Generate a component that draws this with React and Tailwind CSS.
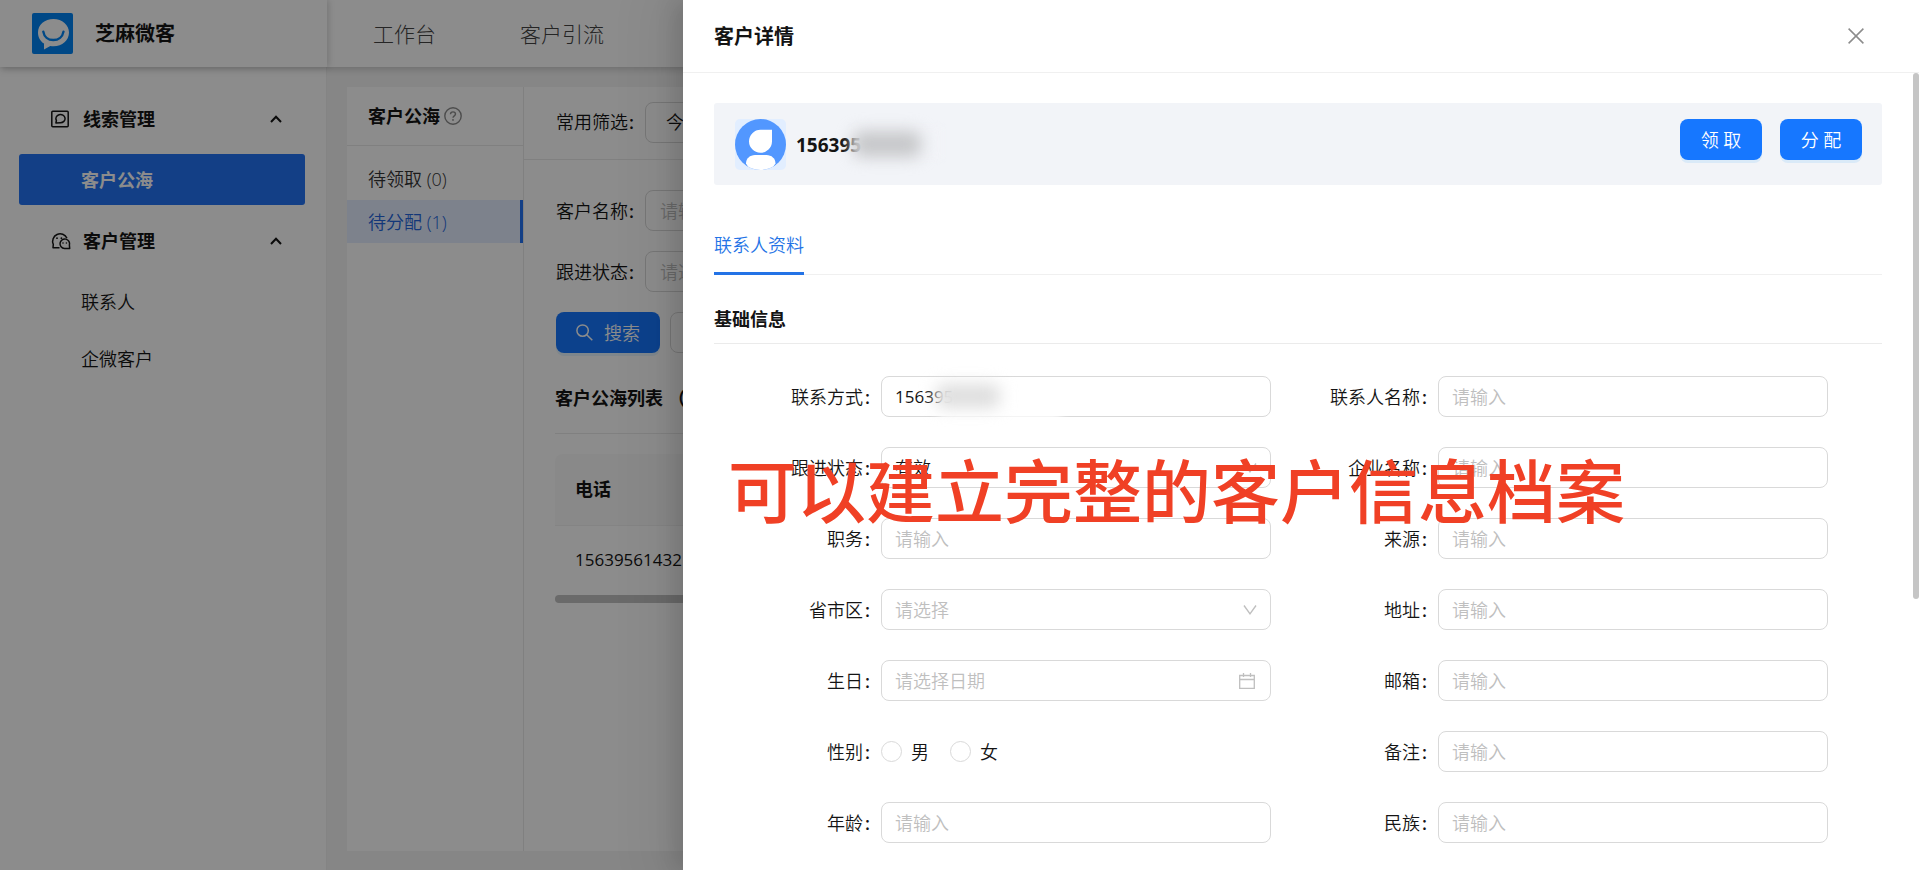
import { useState } from "react";

const TOP_NAV = ["工作台", "客户引流"];

const POOLS = [
  { name: "待领取", count: 0 },
  { name: "待分配", count: 1 },
];

const FIELDS = [
  { id: "phone", label: "联系方式", type: "phone" },
  { id: "name", label: "联系人名称", type: "text" },
  { id: "status", label: "跟进状态", type: "select", value: "有效" },
  { id: "company", label: "企业名称", type: "text" },
  { id: "job", label: "职务", type: "text" },
  { id: "source", label: "来源", type: "text" },
  { id: "region", label: "省市区", type: "select" },
  { id: "address", label: "地址", type: "text" },
  { id: "birthday", label: "生日", type: "date" },
  { id: "email", label: "邮箱", type: "text" },
  { id: "gender", label: "性别", type: "gender" },
  { id: "remark", label: "备注", type: "text" },
  { id: "age", label: "年龄", type: "text" },
  { id: "nation", label: "民族", type: "text" },
];

/* ---------- icons ---------- */

function Logo() {
  return (
    <svg viewBox="0 0 41 41" className="size-[41px]" aria-hidden="true">
      <rect width="41" height="41" rx="2" fill="#0084f4" />
      <path
        d="M21.500 6C12.800 6 6 11.800 6 19.400c0 4.800 2.300 8.800 6 11.200L12 36.500l6.300-3.400c1.100.2 2.100.2 3.200.2C30.300 33.300 37 27.300 37 19.600 37 11.900 30.200 6 21.500 6Z"
        fill="#fff"
      />
      <path
        d="M11.300 18.600c.8 5.200 4.900 8.400 10 8.400 5.200 0 9.300-3.300 10.200-8.400"
        fill="none"
        stroke="#0084f4"
        strokeWidth="2.400"
        strokeLinecap="round"
      />
    </svg>
  );
}

function ClueIcon() {
  return (
    <svg viewBox="0 0 18 18" className="size-[18px]" fill="none" stroke="currentColor" strokeWidth="1.500" aria-hidden="true">
      <rect x="0.800" y="1.300" width="16.400" height="15.400" rx="1" />
      <path d="M4.900 13l.5-2.500a4.600 4.100 0 1 1 3.900 2.200Z" strokeLinejoin="round" />
    </svg>
  );
}

function WechatIcon() {
  return (
    <svg viewBox="0 0 20 18" className="h-[18px] w-5" fill="none" stroke="currentColor" strokeWidth="1.500" strokeLinejoin="round" aria-hidden="true">
      <path d="M8.500 15.800H2l.3-3.400A7.500 7.500 0 1 1 16 6.200" />
      <path d="M18.700 16.600h-5.200a4.800 4.800 0 1 1 4.900-3.400Z" fill="#fff" />
      <g fill="currentColor" stroke="none">
        <circle cx="6" cy="6.200" r="0.900" />
        <circle cx="10.400" cy="6.200" r="0.900" />
        <circle cx="12" cy="11" r="0.800" />
        <circle cx="15.400" cy="11" r="0.800" />
      </g>
    </svg>
  );
}

function CaretUp() {
  return (
    <svg viewBox="0 0 12 8" className="h-2 w-3" fill="none" stroke="currentColor" strokeWidth="2" aria-hidden="true">
      <path d="M1 7l5-5.200L11 7" />
    </svg>
  );
}

function HelpIcon() {
  return (
    <svg viewBox="0 0 18 18" className="size-[18px] text-[#8c8c8c]" fill="none" stroke="currentColor" strokeWidth="1.400" aria-hidden="true">
      <circle cx="9" cy="9" r="8.200" />
      <path d="M6.500 7.200c0-1.400 1.100-2.300 2.500-2.300s2.500.9 2.500 2.200c0 1.700-2.500 1.800-2.500 3.600" />
      <circle cx="9" cy="12.900" r="0.900" fill="currentColor" stroke="none" />
    </svg>
  );
}

function SearchIcon() {
  return (
    <svg viewBox="0 0 17 17" className="size-[17px]" fill="none" stroke="currentColor" strokeWidth="1.500" aria-hidden="true">
      <circle cx="6.600" cy="6.600" r="5.700" />
      <path d="M10.700 10.700l5.600 5.600" />
    </svg>
  );
}

function CloseIcon() {
  return (
    <svg viewBox="0 0 16 16" className="size-4" fill="none" stroke="currentColor" strokeWidth="1.500" aria-hidden="true">
      <path d="M.6.600l14.800 14.800M15.400.600L.6 15.400" />
    </svg>
  );
}

function ChevronDown() {
  return (
    <svg viewBox="0 0 14 10" width="14" height="10" fill="none" stroke="currentColor" strokeWidth="1.400" aria-hidden="true">
      <path d="M1 .5l6 8.300L13 .5" />
    </svg>
  );
}

function CalendarIcon() {
  return (
    <svg viewBox="0 0 16 16" className="size-4" fill="none" stroke="currentColor" strokeWidth="1.300" aria-hidden="true">
      <path d="M.7 2.500h14.600v12.800H.7ZM.7 6.500h14.600M4.500 0v4M11.500 0v4" />
    </svg>
  );
}

function Avatar() {
  return (
    <svg viewBox="0 0 51 51" className="size-[51px]" aria-hidden="true">
      <defs>
        <clipPath id="avatar-clip">
          <circle cx="25.500" cy="25.500" r="25.500" />
        </clipPath>
      </defs>
      <rect width="51" height="51" rx="5" fill="#e2eeff" />
      <circle cx="25.500" cy="25.500" r="25.500" fill="#5297ff" />
      <g fill="#fff" clipPath="url(#avatar-clip)">
        <path d="M25.500 10.800H37V22.500A11.500 11.500 0 1 1 25.500 10.800Z" />
        <path d="M11 44.500c0-5 4-8.500 9-8.500h11.500c5 0 9 3.500 9 8.500L36 51H15Z" />
      </g>
    </svg>
  );
}

/* ---------- page behind the drawer ---------- */

function TopBar() {
  return (
    <header className="relative z-10 flex h-[67px] shrink-0 bg-white shadow-[0_2px_8px_rgba(0,0,0,0.2)]">
      <div className="flex w-[327px] shrink-0 items-center gap-[22px] pl-8 shadow-[2px_0_6px_rgba(0,0,0,0.15)]">
        <Logo />
        <span className="text-[20px] font-bold">芝麻微客</span>
      </div>
      <nav className="flex items-center gap-[84px] pl-[46px] text-[21px] font-light text-[#444]">
        {TOP_NAV.map((item) => (
          <a key={item} href="#" className="whitespace-nowrap">
            {item}
          </a>
        ))}
      </nav>
    </header>
  );
}

function MenuHeader({ icon, title }) {
  return (
    <button type="button" className="flex h-[51px] w-full items-center pr-[23px] pl-8 font-bold">
      <span className="flex w-8 items-center">{icon}</span>
      {title}
      <span className="ml-auto">
        <CaretUp />
      </span>
    </button>
  );
}

function Sidebar() {
  return (
    <aside className="flex w-[327px] shrink-0 flex-col gap-[10px] border-r border-[#f0f0f0] bg-white pt-[26px] pr-[21px] pl-[19px]">
      <MenuHeader icon={<ClueIcon />} title="线索管理" />
      <a href="#" className="flex h-[51px] items-center rounded-[3px] bg-[#2373f5] pl-[62px] font-bold text-white">
        客户公海
      </a>
      <MenuHeader icon={<WechatIcon />} title="客户管理" />
      <div className="flex flex-col gap-[6px]">
        <a href="#" className="flex h-[51px] items-center pl-[62px]">
          联系人
        </a>
        <a href="#" className="flex h-[51px] items-center pl-[62px]">
          企微客户
        </a>
      </div>
    </aside>
  );
}

function PoolPanel() {
  return (
    <section className="w-[177px] shrink-0 border-r border-[#eaeaea]">
      <h2 className="flex h-[59px] items-center gap-1 border-b border-[#eaeaea] pl-[21px] font-bold">
        客户公海
        <HelpIcon />
      </h2>
      <ul className="pt-[11px]">
        {POOLS.map((pool) => (
          <li key={pool.name}>
            <a
              href="#"
              className={
                pool.count > 0
                  ? "flex h-[43px] items-center border-r-[3px] border-[#2373f5] bg-[#e3edff] pl-[21px] text-[#2464dc]"
                  : "flex h-[43px] items-center pl-[21px] text-[#333]"
              }
            >
              {pool.name} ({pool.count})
            </a>
          </li>
        ))}
      </ul>
    </section>
  );
}

function FilterInput({ id, label, placeholder }) {
  return (
    <div className="flex items-center">
      <label htmlFor={id} className="w-[89px] shrink-0 whitespace-nowrap">
        {label}<span className="ml-px font-semibold">:</span>
      </label>
      <input
        id={id}
        placeholder={placeholder}
        className="h-[41px] w-80 rounded-lg border border-[#d9d9d9] bg-white px-[14px] placeholder:text-[#bfbfbf]"
      />
    </div>
  );
}

function CustomerList() {
  return (
    <section className="min-w-0 flex-1 overflow-hidden">
      <div className="flex h-[73px] items-center border-b border-[#eaeaea] pb-[2px] pl-8">
        <span className="w-[89px] shrink-0 whitespace-nowrap">
          常用筛选<span className="ml-px font-semibold">:</span>
        </span>
        <button type="button" className="h-[41px] rounded-lg border border-[#d9d9d9] px-5">
          今天
        </button>
      </div>

      <div className="pt-[30px] pl-[31px]">
        <div className="flex flex-col gap-[20px] pl-px">
          <FilterInput id="filter-name" label="客户名称" placeholder="请输入" />
          <FilterInput id="filter-status" label="跟进状态" placeholder="请选择" />
          <div className="flex gap-[10px]">
            <button
              type="button"
              className="flex h-[41px] w-[104px] items-center justify-center gap-[11px] rounded-lg bg-[#1677ff] text-white shadow-[0_3px_0_rgba(5,145,255,0.1)]"
            >
              <SearchIcon />
              搜索
            </button>
            <button type="button" className="h-[41px] rounded-lg border border-[#d9d9d9] px-5">
              重置
            </button>
          </div>
        </div>

        <h2 className="mt-[10px] flex h-[71px] items-center border-b border-[#eaeaea] font-bold whitespace-nowrap">
          客户公海列表 （共1条）
        </h2>

        <table className="mt-5 w-full text-left">
          <thead>
            <tr>
              <th className="h-[71px] rounded-tl-lg border-b border-[#f0f0f0] bg-[#fafafa] pl-5 font-bold">电话</th>
            </tr>
          </thead>
          <tbody>
            <tr>
              <td className="h-[70px] pl-5 text-[17px] font-normal">15639561432</td>
            </tr>
          </tbody>
        </table>
        <div className="h-2 rounded-full bg-[#c1c1c1]" />
      </div>
    </section>
  );
}

/* ---------- drawer ---------- */

const BOX =
  "h-[41px] w-full rounded-lg border border-[#d9d9d9] bg-white px-[13px] placeholder:text-[#bfbfbf] focus:outline-none focus:border-[#1677ff]";

function Control({ field }) {
  const [gender, setGender] = useState("");

  if (field.type === "phone") {
    return (
      <div className="relative">
        <input id={field.id} defaultValue="156395" className={`${BOX} text-[17px] font-normal`} />
        {/* privacy smudge over the rest of the number */}
        <span className="absolute top-3 left-[58px] h-8 w-[122px] bg-white/90 blur-[5px]" />
        <span className="absolute top-2 left-[55px] h-6 w-16 rounded-lg bg-[#dedede] blur-[8px]" />
      </div>
    );
  }

  if (field.type === "select") {
    return (
      <div className="relative">
        <select
          id={field.id}
          defaultValue={field.value ?? ""}
          className={`${BOX} appearance-none ${field.value ? "" : "text-[#bfbfbf]"}`}
        >
          <option value={field.value ?? ""}>{field.value ?? "请选择"}</option>
        </select>
        <span className="pointer-events-none absolute inset-y-0 right-[14px] flex items-center text-[#bfbfbf]">
          <ChevronDown />
        </span>
      </div>
    );
  }

  if (field.type === "date") {
    return (
      <div className="relative">
        <input id={field.id} placeholder="请选择日期" className={BOX} />
        <span className="pointer-events-none absolute inset-y-0 right-4 flex items-center text-[#bfbfbf]">
          <CalendarIcon />
        </span>
      </div>
    );
  }

  if (field.type === "gender") {
    return (
      <div className="flex h-[41px] items-center gap-[21px]">
        {["男", "女"].map((g) => (
          <label key={g} className="flex items-center gap-[9px]">
            <input
              type="radio"
              name="gender"
              value={g}
              checked={gender === g}
              onChange={() => setGender(g)}
              className="size-[21px] appearance-none rounded-full border border-[#d9d9d9] checked:border-[6px] checked:border-[#1677ff]"
            />
            {g}
          </label>
        ))}
      </div>
    );
  }

  return <input id={field.id} placeholder="请输入" className={BOX} />;
}

function FormRow({ field }) {
  const label = (
    <>
      {field.label}
      <span className="mr-[11px] ml-[2px] font-semibold">:</span>
    </>
  );
  return (
    <div className="flex items-center">
      {field.type === "gender" ? (
        <span className="w-[167px] shrink-0 text-right">{label}</span>
      ) : (
        <label htmlFor={field.id} className="w-[167px] shrink-0 text-right">
          {label}
        </label>
      )}
      <div className="min-w-0 flex-1">
        <Control field={field} />
      </div>
    </div>
  );
}

function PrimaryButton({ children }) {
  return (
    <button
      type="button"
      className="h-[41px] w-[82px] rounded-lg bg-[#1677ff] text-white shadow-[0_3px_0_rgba(5,145,255,0.1)]"
    >
      {children}
    </button>
  );
}

function Drawer() {
  return (
    <div
      role="dialog"
      aria-label="客户详情"
      className="flex h-full w-[calc(100%-683px)] flex-col bg-white shadow-[-8px_0_20px_rgba(0,0,0,0.12),-12px_0_48px_16px_rgba(0,0,0,0.06)]"
    >
      <div className="flex h-[73px] shrink-0 items-center justify-between border-b border-[#f0f0f0] pr-[55px] pl-[31px]">
        <h1 className="pt-[2px] text-[20px] font-bold">客户详情</h1>
        <button type="button" aria-label="关闭" className="text-[#8c8c8c]">
          <CloseIcon />
        </button>
      </div>

      <div className="flex min-h-0 flex-1">
        <div className="min-w-0 flex-1 overflow-hidden px-[31px] pt-[30px]">
          <div className="flex h-[82px] items-start rounded-[3px] bg-[#f2f4f8] pt-4 pr-5 pl-[21px]">
            <Avatar />
            <div className="relative ml-[10px] flex h-[51px] items-center">
              <span className="text-[19px] font-bold">156395</span>
              {/* privacy smudge over the rest of the number */}
              <span className="absolute top-2 left-[56px] h-8 w-[90px] bg-[#f2f4f8]/70 blur-[3px]" />
              <span className="absolute top-3 left-[57px] h-[26px] w-[68px] rounded-lg bg-[#c6c7c9] blur-[8px]" />
            </div>
            <div className="ml-auto flex gap-[18px]">
              <PrimaryButton>领 取</PrimaryButton>
              <PrimaryButton>分 配</PrimaryButton>
            </div>
          </div>

          <div className="mt-[30px] flex h-[60px] border-b border-[#f0f0f0]">
            <button type="button" className="h-[60px] border-b-[3px] border-[#2373e6] pt-[2px] text-[#2373e6]">
              联系人资料
            </button>
          </div>

          <h2 className="mt-[20px] flex h-[49px] items-center border-b border-[#ebebeb] font-bold">基础信息</h2>

          <form className="mt-8 grid grid-cols-2 gap-y-[30px] pr-[54px]">
            {FIELDS.map((field) => (
              <FormRow key={field.id} field={field} />
            ))}
          </form>
        </div>
        <div className="w-[6px] shrink-0">
          <div className="h-[66%] rounded-full bg-[#c5c5c5]" />
        </div>
      </div>
    </div>
  );
}

export default function App() {
  return (
    <div className="relative flex h-screen flex-col overflow-hidden bg-[#f5f5f5] font-['Open_Sans','Noto_Sans_CJK_SC',sans-serif] text-[18px] leading-7 font-[350] text-[#141414]">
      <TopBar />
      <div className="flex min-h-0 flex-1">
        <Sidebar />
        <main className="mt-5 mb-[19px] ml-5 flex min-w-0 flex-1 bg-white">
          <PoolPanel />
          <CustomerList />
        </main>
      </div>

      {/* mask + drawer */}
      <div className="absolute inset-0 z-20 flex justify-end bg-black/45">
        <Drawer />
      </div>

      {/* caption */}
      <p className="pointer-events-none absolute top-[438px] left-[728px] z-30 font-['Noto_Sans_CJK_SC',sans-serif] text-[69px] leading-[100px] font-medium whitespace-nowrap text-[#f04025]">
        可以建立完整的客户信息档案
      </p>
    </div>
  );
}
